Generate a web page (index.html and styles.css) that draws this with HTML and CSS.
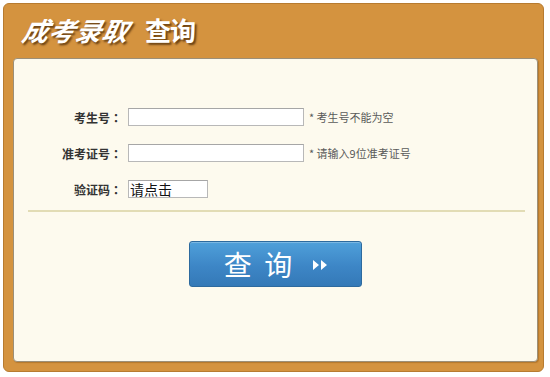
FILE: index.html
```html
<!DOCTYPE html>
<html lang="zh-CN">
<head>
<meta charset="utf-8">
<title>成考录取 查询</title>
<link rel="stylesheet" href="styles.css">
</head>
<body>
<div class="frame">
  <div class="header">
    <h1 class="title"><span class="slant">成考录取</span><span class="plain">查询</span></h1>
  </div>
  <div class="panel">
    <form class="form">
      <div class="row">
        <label class="label">考生号<span class="colon" lang="zh-TW">：</span></label>
        <input class="field" type="text">
        <span class="hint">* 考生号不能为空</span>
      </div>
      <div class="row">
        <label class="label">准考证号<span class="colon" lang="zh-TW">：</span></label>
        <input class="field" type="text">
        <span class="hint">* 请输入9位准考证号</span>
      </div>
      <div class="row">
        <label class="label">验证码<span class="colon" lang="zh-TW">：</span></label>
        <input class="field captcha" type="text" value="请点击">
      </div>
    </form>
    <div class="divider"></div>
    <div class="actions">
      <button class="btn" type="button"><span class="btn-text">查&nbsp;&nbsp;询</span><svg class="arrows" width="17" height="12" viewBox="0 0 17 12"><path d="M1 1 L7 6 L1 11 Z M9 1 L15 6 L9 11 Z" fill="#fff"/></svg></button>
    </div>
  </div>
</div>
</body>
</html>
```
FILE: styles.css
```css
html, body {
  margin: 0;
  padding: 0;
  background: #ffffff;
}
body {
  font-family: "Noto Sans CJK SC", "Liberation Sans", sans-serif;
  width: 550px;
  height: 377px;
  overflow: hidden;
}
.frame {
  margin: 3px 0 0 3px;
  width: 539px;
  height: 367px;
  background: #d4933f;
  border: 1px solid #b77b30;
  border-radius: 6px;
  display: flex;
  flex-direction: column;
}
.header {
  height: 54px;
  display: flex;
  align-items: center;
  padding-left: 19px;
}
.title {
  margin: 0;
  font-size: 26px;
  line-height: 1;
  font-weight: bold;
  color: #ffffff;
  text-shadow: 2px 2px 2px rgba(60, 30, 0, 0.7);
  display: flex;
  gap: 16px;
  position: relative;
  top: -1px;
}
.slant {
  font-style: italic;
  transform: skewX(-12deg);
  display: inline-block;
  letter-spacing: 0.5px;
}
.plain {
  letter-spacing: -1px;
}
.panel {
  margin-left: 9px;
  width: 523px;
  height: 302px;
  background: #fdfaee;
  border: 1px solid #9c8f78;
  border-radius: 4px;
  box-shadow: 1px 1px 1px rgba(120, 70, 10, 0.35);
}
.form {
  padding-top: 49px;
  display: flex;
  flex-direction: column;
  gap: 18px;
}
.row {
  display: flex;
  align-items: center;
  height: 18px;
}
.label {
  width: 108px;
  text-align: right;
  font-size: 12px;
  font-weight: bold;
  color: #333333;
  margin-right: 6px;
  white-space: nowrap;
}
.colon {
  font-family: "Noto Sans CJK TC", "Noto Sans CJK SC", sans-serif;
}
.field {
  box-sizing: border-box;
  width: 176px;
  height: 18px;
  margin: 0;
  padding: 0 2px;
  border: 1px solid #b8b8b8;
  border-top-color: #a6a6a6;
  background: #ffffff;
  font-family: "Noto Sans CJK SC", sans-serif;
  font-size: 12px;
  outline: none;
}
.captcha {
  width: 80px;
  font-size: 14px;
  color: #111111;
  padding: 0 1px;
  line-height: 16px;
}
.hint {
  margin-left: 5px;
  font-size: 11px;
  color: #5a5a5a;
  white-space: nowrap;
}
.divider {
  margin: 12px 12px 0 14px;
  height: 2px;
  background: #e2dcb5;
}
.actions {
  display: flex;
  justify-content: center;
  padding-top: 29px;
}
.btn {
  width: 173px;
  height: 46px;
  border: 1px solid #2d6a9e;
  border-radius: 3px;
  background: linear-gradient(#4fa0da, #3d86c6 55%, #3479b7);
  box-shadow: inset 0 1px 0 rgba(255, 255, 255, 0.25);
  color: #ffffff;
  display: flex;
  align-items: center;
  justify-content: center;
  padding: 0 0 0 2px;
  cursor: pointer;
}
.btn-text {
  font-family: "Noto Sans CJK SC", sans-serif;
  font-size: 28px;
  font-weight: normal;
  line-height: 1;
}
.arrows {
  margin-left: 20px;
  margin-top: 2px;
}
```
